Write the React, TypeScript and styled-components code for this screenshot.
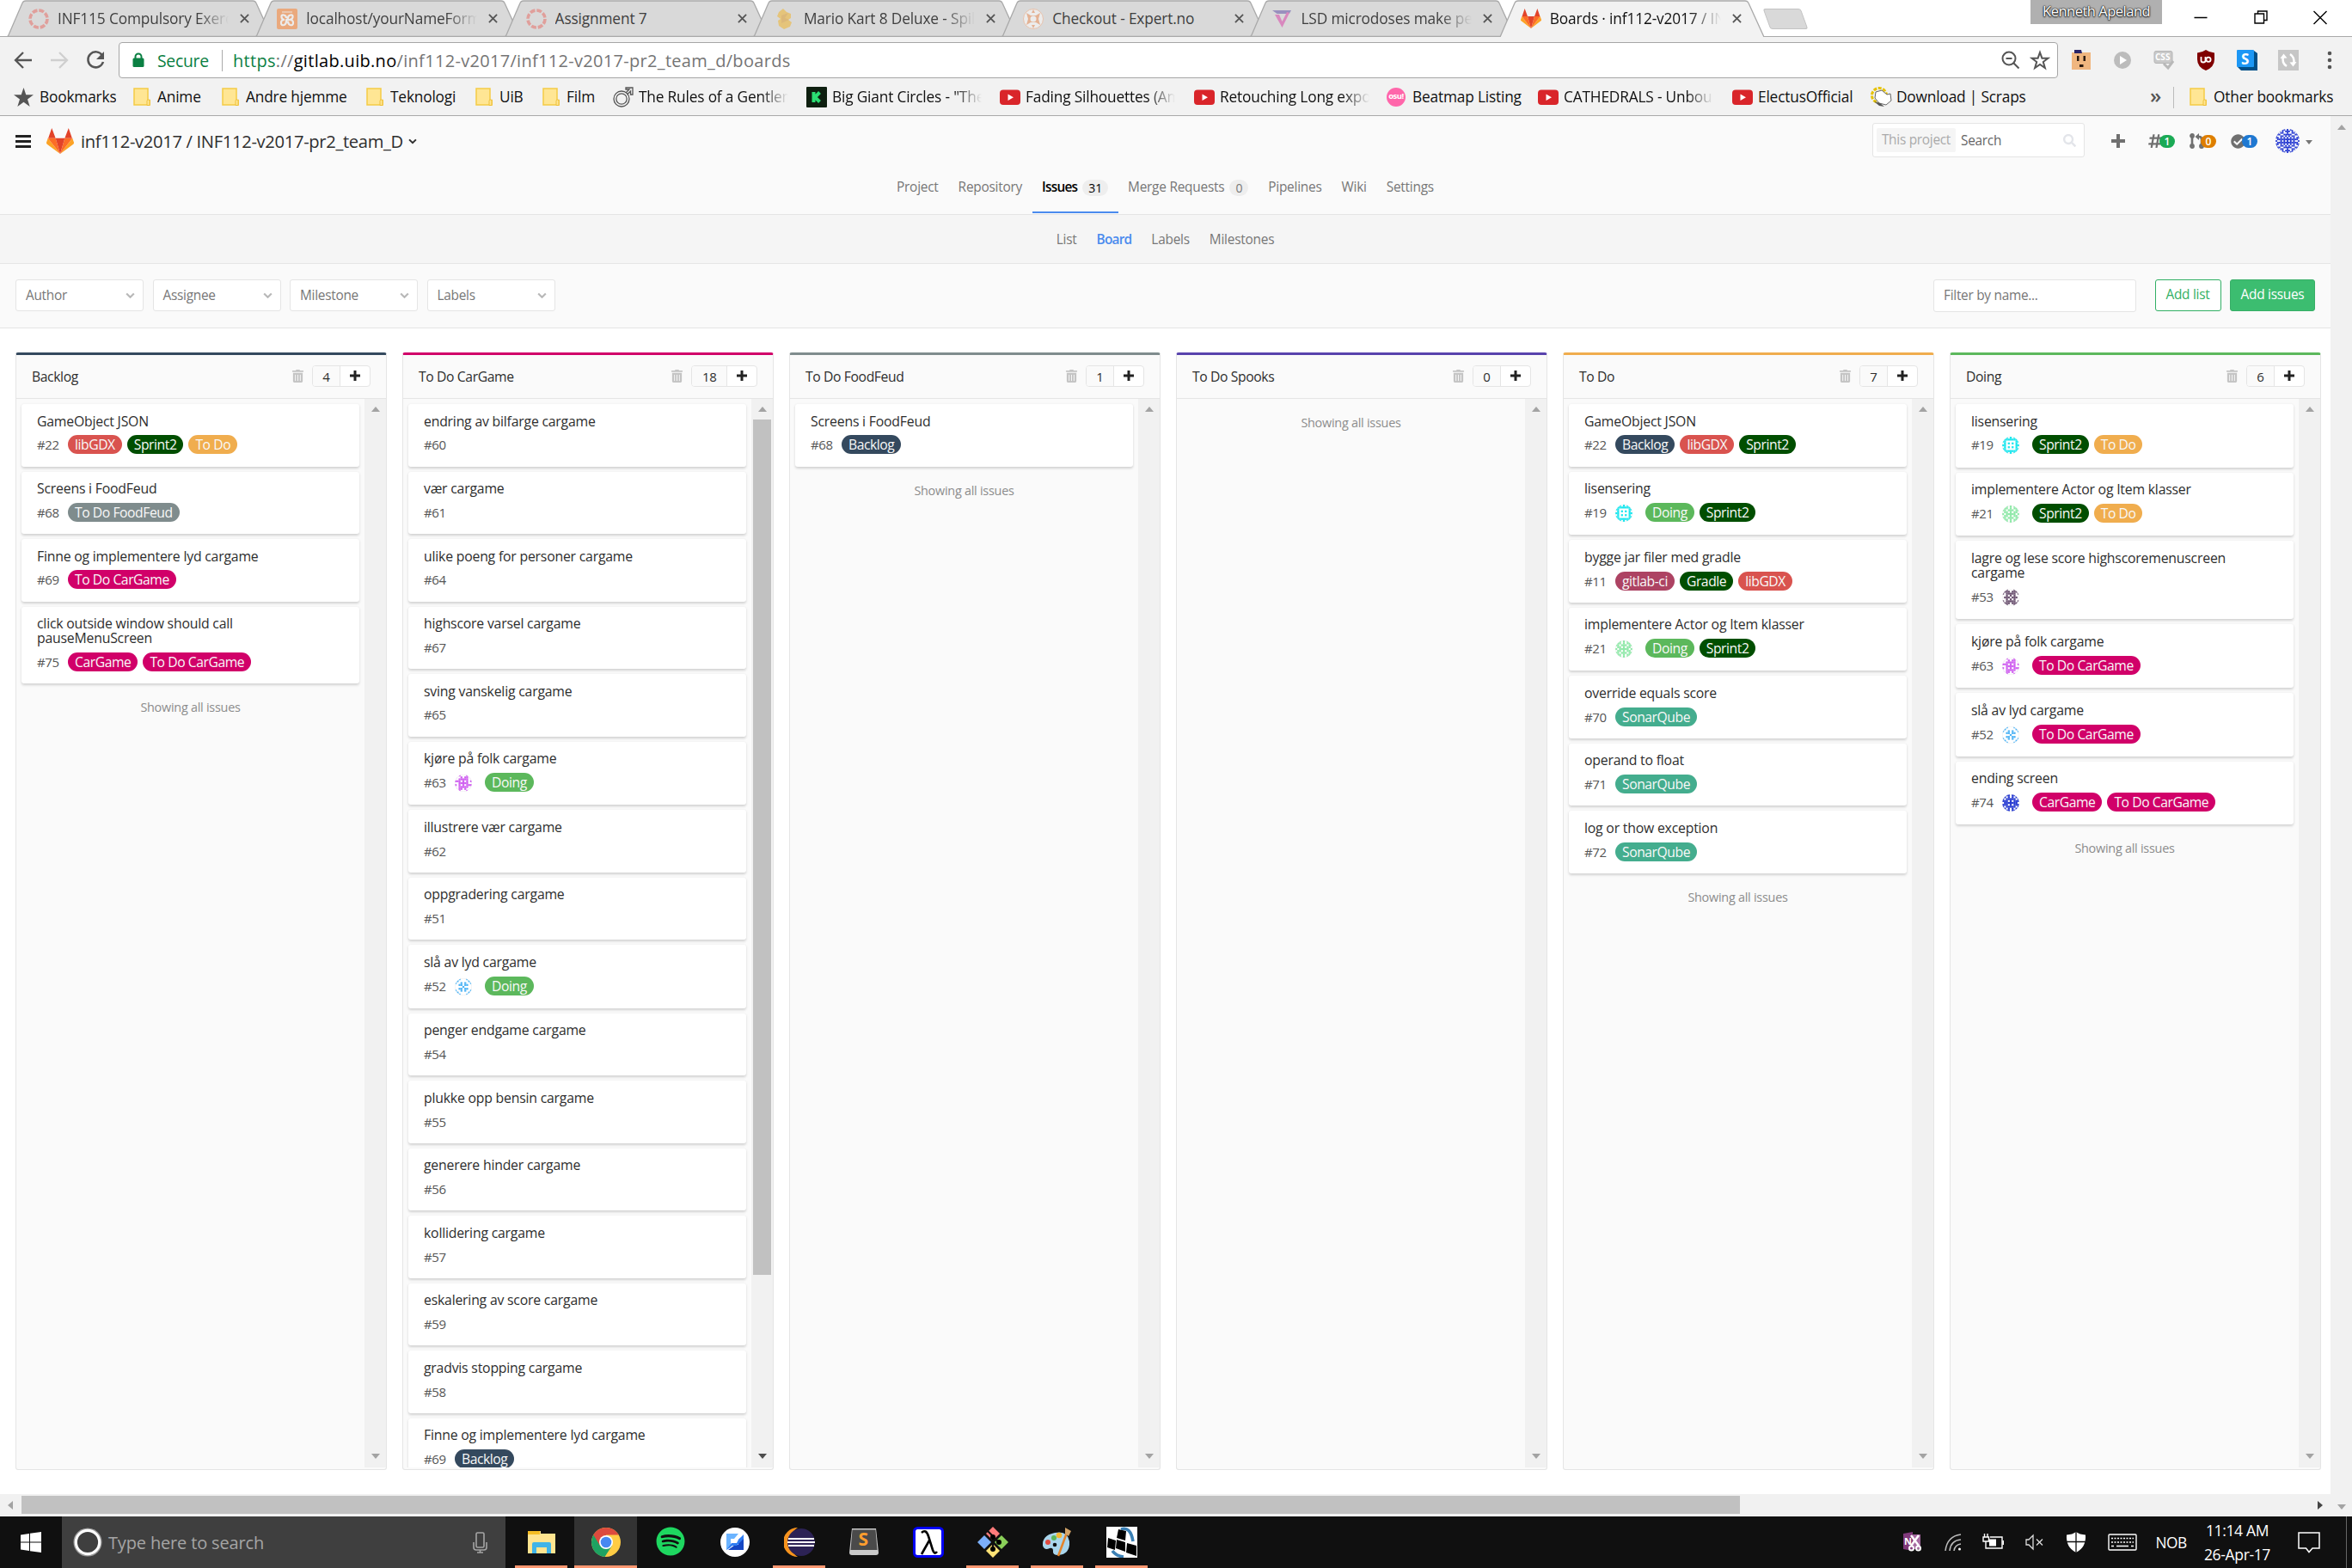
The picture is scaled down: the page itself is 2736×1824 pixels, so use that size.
import React from "react";
import styled, { createGlobalStyle, css } from "styled-components";
import { FaTrashAlt, FaSearch, FaHashtag, FaCheckCircle, FaSpotify } from "react-icons/fa";

const Global = createGlobalStyle`
  *, *::before, *::after { box-sizing: border-box; }
  html, body { margin: 0; padding: 0; }
  body {
    width: 2736px; height: 1824px; overflow: hidden; background: #fff;
    font-family: "Open Sans", "Noto Sans", sans-serif; font-size: 15.4px;
    letter-spacing: -0.018em; color: #333;
  }
  svg { display: block; flex: none; }
`;

const Screen = styled.div`
  width: 2736px; height: 1824px; display: flex; flex-direction: column; overflow: hidden;
`;

/* ---------- browser chrome ---------- */
const TabStrip = styled.div`
  height: 43px; flex: none; display: flex; position: relative; padding-left: 18px; background: #fff;
  border-bottom: 1px solid #a9a9a9;
`;
const Tab = styled.div<{ $active?: boolean }>`
  position: relative; width: 289.3px; flex: none; height: 43px; display: flex; align-items: center;
  padding-left: 15px; font-size: 17.3px; color: ${p => (p.$active ? "#111" : "#3f3f3f")};
  z-index: ${p => (p.$active ? 2 : 1)};
`;
const TabShape = styled.svg`position: absolute; left: -10px; top: 0; z-index: -1;`;
const TabIcon = styled.span<{ $faded?: boolean }>`
  width: 24px; height: 24px; margin-right: 10px; opacity: ${p => (p.$faded ? 0.5 : 1)}; flex: none;
`;
const fade = css`
  -webkit-mask-image: linear-gradient(to right, #000 82%, transparent 100%);
  mask-image: linear-gradient(to right, #000 82%, transparent 100%);
`;
const TabTitle = styled.span<{ $fade?: boolean }>`
  width: 199px; overflow: hidden; white-space: nowrap; line-height: 28px; letter-spacing: -0.008em;
  ${p => p.$fade && fade}
`;
const TabClose = styled.svg`margin-left: 13px;`;
const NewTab = styled.div`
  width: 44px; height: 24px; margin: 10px 0 0 12px; background: #d9d9d9; border: 1px solid #c3c3c3;
  border-radius: 3px; transform: skewX(20deg);
`;
const UserBadge = styled.div`
  width: 153px; height: 28px; margin-left: 263px; background: #b0b0b0; color: #fff; font-size: 16.5px;
  line-height: 26px; text-align: center; letter-spacing: -0.03em;
  text-shadow: 0 0 2px #000, 0 1px 2px #222, 0 0 1px #000;
`;
const WindowButtons = styled.div`
  display: flex; align-items: flex-start; gap: 51.5px; padding: 11px 0 0 36px;
`;

const Toolbar = styled.div`
  height: 49px; flex: none; display: flex; align-items: center; background: #f2f2f2; padding: 5px 0 0 15px;
`;
const NavButtons = styled.div`display: flex; gap: 18px; width: 123px; flex: none;`;
const Omnibox = styled.div`
  width: 2256px; height: 42px; display: flex; align-items: center; background: #fff;
  border: 1.5px solid #a6a6a6; border-radius: 4px; padding-left: 14px; font-size: 20px; flex: none;
`;
const Secure = styled.span`color: #0b8043; margin-left: 14px; width: 75px; font-size: 19.4px;`;
const UrlRule = styled.i`width: 1px; height: 25px; background: #aaa; margin-right: 12px;`;
const BarRule = styled.i`width: 1px; height: 25px; background: #bbb; margin-right: 15px;`;
const Url = styled.span`
  color: #757575; flex: 1; letter-spacing: 0.0155em;
  b { font-weight: 400; color: #000; }
  em { font-style: normal; color: #0b8043; }
`;
const OmniIcons = styled.div`display: flex; gap: 10px; padding-right: 8px;`;
const Extensions = styled.div`
  display: flex; align-items: center; gap: 24.2px; padding-left: 15px;
`;

const Bookmarks = styled.div`
  height: 43px; flex: none; display: flex; align-items: center; background: #f2f2f2;
  border-bottom: 1.5px solid #a9a9a9; padding: 0 0 0 15px; font-size: 17.3px; color: #111;
`;
const Bookmark = styled.div<{ $w: number }>`
  width: ${p => p.$w}px; display: flex; align-items: center; flex: none;
`;
const BookmarkIcon = styled.span`width: 31px; flex: none; display: flex; padding-left: 1px;`;
const BookmarkText = styled.span<{ $fade?: boolean }>`
  white-space: nowrap; overflow: hidden; line-height: 26px; letter-spacing: -0.01em;
  ${p => p.$fade && css`width: 174px; ${fade}`}
`;
const MoreMark = styled.span`
  margin-left: 137px; width: 27px; font-size: 24px; color: #555; line-height: 26px; padding-bottom: 5px; font-weight: 600;
`;

/* ---------- page ---------- */
const Viewport = styled.div`height: 1629px; flex: none; display: flex;`;
const Page = styled.div`width: 2711px; flex: none; display: flex; flex-direction: column; background: #fff;`;
const VScroll = styled.div`
  width: 25px; flex: none; background: #f1f1f1; display: flex; flex-direction: column;
  justify-content: space-between; align-items: center; padding: 10px 0 8px;
`;
const ArrowUp = styled.i`
  border: 5.5px solid transparent; border-top: 0; border-bottom: 6px solid #a3a3a3;
`;
const ArrowDown = styled.i<{ $dark?: boolean }>`
  border: 5.5px solid transparent; border-bottom: 0; border-top: 6px solid ${p => (p.$dark ? "#4d4d4d" : "#a3a3a3")};
`;
const Header = styled.header`
  height: 58px; flex: none; background: #fafafa; display: flex; align-items: center; padding: 0 21px 0 18px;
`;
const Burger = styled.svg`margin-right: 18px;`;
const ProjectTitle = styled.div`
  font-size: 20.2px; color: #2e2e2e; margin-left: 8px; width: 381px; white-space: nowrap; letter-spacing: -0.0165em;
  line-height: 28px;
`;
const Spacer = styled.div`flex: 1;`;
const SearchBox = styled.div`
  width: 247px; height: 40px; border: 1.5px solid #e5e5e5; border-radius: 3px; background: #fff;
  display: flex; align-items: center; padding: 0 9px 0 4px; color: #666; margin-right: 31px; margin-top: -2px;
`;
const SearchScope = styled.span`
  background: #f5f5f5; color: #aaa; width: 92px; height: 28px; line-height: 28px; text-align: center;
  margin-right: 6px; border-radius: 2px; white-space: nowrap;
`;
const SearchText = styled.span`flex: 1;`;
const Counter = styled.div<{ $w: number }>`display: flex; align-items: center; width: ${p => p.$w}px;`;
const CountBadge = styled.span<{ $c: string }>`
  background: ${p => p.$c}; color: #fff; width: 18px; height: 15px; border-radius: 8px; font-size: 12px;
  font-weight: 600; line-height: 15px; text-align: center; margin-left: -4px; letter-spacing: 0;
`;
const Caret = styled.i`border: 4.5px solid transparent; border-bottom: 0; border-top: 5px solid #777; margin-left: 7px; margin-top: 3px;`;

const MainNav = styled.nav`
  height: 57px; flex: none; background: #fafafa; border-bottom: 1.5px solid #e5e5e5;
  display: flex; justify-content: center;
`;
const NavItem = styled.a<{ $active?: boolean }>`
  display: flex; align-items: center; padding: 0 11.5px 4px; color: ${p => (p.$active ? "#000" : "#777")};
  font-weight: ${p => (p.$active ? 600 : 400)}; font-size: 15.4px; height: 55px;
  border-bottom: 2.5px solid ${p => (p.$active ? "#4a8bee" : "transparent")};
  letter-spacing: ${p => (p.$active ? "-0.05em" : "-0.015em")};
`;
const NavBadge = styled.span`
  background: #eee; border-radius: 10px; padding: 0 7px; height: 19px; line-height: 20px; font-size: 14px;
  font-weight: 400; margin-left: 6px; margin-top: 2px; letter-spacing: -0.01em;
`;
const SubNav = styled.nav`
  height: 57px; flex: none; background: #f5f5f5; border-bottom: 1.5px solid #e5e5e5; display: flex;
  justify-content: center; align-items: center; gap: 23px; color: #777; font-size: 15.4px;
`;
const SubItem = styled.a<{ $active?: boolean }>`
  color: ${p => (p.$active ? "#4a8bee" : "#777")}; font-weight: ${p => (p.$active ? 600 : 400)};
  letter-spacing: ${p => (p.$active ? "-0.05em" : "-0.015em")};
`;
const Filters = styled.div`
  height: 75px; flex: none; background: #fafafa; border-bottom: 1.5px solid #e5e5e5; display: flex;
  align-items: center; padding: 0 18px 1px; gap: 10.5px;
`;
const Select = styled.div`
  width: 149px; height: 37px; background: #fff; border: 1.5px solid #e5e5e5; border-radius: 3px;
  display: flex; align-items: center; justify-content: space-between; padding: 0 9px 0 11px; color: #777;
`;
const NameFilter = styled.div`
  width: 236px; height: 38px; background: #fff; border: 1.5px solid #e5e5e5; border-radius: 3px;
  line-height: 36px; padding-left: 11px; color: #777; margin-right: 11px;
`;
const Button = styled.div<{ $solid?: boolean; $w: number }>`
  width: ${p => p.$w}px; height: 37px; border: 1.5px solid ${p => (p.$solid ? "#38ae67" : "#31af64")};
  border-radius: 3px; line-height: 34px; text-align: center; background: ${p => (p.$solid ? "#3cbd70" : "#fff")};
  color: ${p => (p.$solid ? "#fff" : "#31af64")};
`;

/* ---------- board ---------- */
const Board = styled.main`
  height: 1356px; flex: none; padding: 28px 0 0 18px; display: flex; gap: 18px; overflow: hidden;
`;
const Column = styled.section<{ $c: string }>`
  width: 432px; height: 1300px; flex: none; background: #fafafa; border: 1.5px solid #e5e5e5;
  border-top: 3.5px solid ${p => p.$c}; border-radius: 3px; display: flex; flex-direction: column;
`;
const ColumnHead = styled.header`
  height: 51px; flex: none; border-bottom: 1.5px solid #e5e5e5; display: flex; align-items: center;
  padding: 0 18px 2px; color: #2e2e2e; font-weight: 500; font-size: 15.7px;
`;
const ColumnTitle = styled.h3`
  flex: 1; margin: 0; font: inherit; letter-spacing: -0.024em; padding-top: 1px;
`;
const CountGroup = styled.div`
  display: flex; height: 25px; border: 1.5px solid #e5e5e5; border-radius: 4px; margin-left: 9px; background: #fff; overflow: hidden;
`;
const Count = styled.span`
  padding: 0 11.5px; line-height: 24px; background: #fafafa; border-right: 1px solid #e5e5e5; font-size: 15px;
`;
const AddCell = styled.span`width: 34px; display: flex; justify-content: center; padding-top: 5px;`;
const ColumnBody = styled.div`display: flex; height: 1243px; flex: none; overflow: hidden;`;
const CardList = styled.div`width: 405px; padding: 6px 6px 0 6px;`;
const Card = styled.article<{ $h: number }>`
  height: ${p => p.$h}px; margin-bottom: 6px; background: #fff; border-radius: 3px; padding: 11.5px 18px 0;
  box-shadow: 0 1.5px 3px rgba(0, 0, 0, 0.16); display: flex; flex-direction: column; width: 393px;
`;
const CardTitle = styled.h4`
  margin: 0; font-size: 15.8px; font-weight: 500; line-height: 17.3px; color: #2e2e2e; letter-spacing: -0.013em;
  max-width: 330px;
`;
const CardMeta = styled.div`
  display: flex; align-items: center; height: 22px; margin-top: 7.7px; color: #555;
`;
const CardId = styled.span`width: 36px; font-size: 15px; letter-spacing: -0.03em;`;
const AvatarSlot = styled.span`width: 35px; padding-top: 2px;`;
const Pill = styled.span<{ $c: string }>`
  background: ${p => p.$c}; color: #f8f8f8; height: 22px; line-height: 22px; border-radius: 11px; padding: 0 8px;
  margin-right: 6px; font-size: 15.7px; font-weight: 500; white-space: nowrap; letter-spacing: -0.028em;
`;
const Footer = styled.p`
  margin: 0; text-align: center; color: #8c8c8c; font-size: 14.4px; line-height: 43px; letter-spacing: -0.017em;
`;
const ColScroll = styled.div`
  width: 25px; flex: none; background: #f1f1f1; display: flex; flex-direction: column; align-items: center;
  padding: 9px 0 10px; justify-content: space-between;
`;
const Thumb = styled.i`width: 21px; height: 995px; background: #c1c1c1; margin: 9px 0 auto;`;
const HScroll = styled.div`
  height: 25px; flex: none; background: #f1f1f1; display: flex; align-items: center; padding: 0 9px 0 9px;
  justify-content: space-between;
`;
const HThumb = styled.i`width: 1999px; height: 21px; background: #c1c1c1; margin: 0 auto 0 10px;`;
const ArrowSide = styled.i<{ $right?: boolean }>`
  border: 5.5px solid transparent;
  ${p => (p.$right ? "border-right: 0; border-left: 6px solid #444;" : "border-left: 0; border-right: 6px solid #a3a3a3;")}
`;

/* ---------- taskbar ---------- */
const Taskbar = styled.footer`
  height: 60px; flex: none; background: #101010; display: flex; align-items: center; color: #fff;
`;
const Start = styled.div`width: 72px; display: flex; justify-content: center;`;
const TaskSearch = styled.div`
  width: 516px; height: 60px; background: #3f3f3f; display: flex; align-items: center; padding: 0 21px 0 13px;
  color: #a5a5a5; font-size: 20px;
`;
const TaskSearchText = styled.span`flex: 1; margin-left: 7px; letter-spacing: -0.008em; padding-top: 1px;`;
const Apps = styled.div`display: flex; margin-left: 4px; height: 60px;`;
const TaskApp = styled.div<{ $open?: boolean; $active?: boolean }>`
  width: 75px; height: 60px; display: flex; flex-direction: column; align-items: center; padding-top: 12px;
  justify-content: space-between;
  &::after {
    content: ""; height: 3px; width: ${p => (p.$active ? 73 : 61)}px;
    background: ${p => (p.$open || p.$active ? "#ff9770" : "transparent")};
  }
  ${p => p.$active && "background: linear-gradient(to right, transparent 1px, #333 1px, #333 74px, transparent 74px);"}
`;
const Tray = styled.div`display: flex; align-items: center; margin-left: auto; padding-right: 6px; height: 60px;`;
const TrayItem = styled.span<{ $w: number }>`width: ${p => p.$w}px; flex: none; display: flex; justify-content: center;`;
const Lang = styled.span`font-size: 17.3px; width: 49px; letter-spacing: -0.03em; margin-left: 9px;`;
const Clock = styled.div`
  width: 92px; font-size: 17.5px; line-height: 28px; text-align: center; letter-spacing: -0.02em; white-space: nowrap;
`;
const ShowDesktop = styled.i`width: 1.5px; height: 60px; background: #666; margin-left: 6px;`;

/* ---------- drawings ---------- */
const Fox = ({ w, h }: { w: number; h: number }) => (
  <svg width={w} height={h} viewBox="0 0 36 33" preserveAspectRatio="none">
    <path fill="#e24329" d="M2 14 7 0l5 13H2zM34 14 29 0l-5 13h10z" />
    <path fill="#fca326" d="M2 13 0 18.500a2 2 0 0 0 .8 2L18 33zM34 13l2 5.500a2 2 0 0 1-.8 2L18 33z" />
    <path fill="#fc6d26" d="M2 13h10l6 20zM34 13H24l-6 20z" />
    <path fill="#e24329" d="M12 13h12l-6 20z" />
  </svg>
);
const Folder = () => (
  <svg width="24" height="24" viewBox="0 0 24 24">
    <path d="M3 2h16v13.500h2.200V21H3z" fill="#ffe694" stroke="#f5cb45" strokeWidth="1.500" />
    <path d="M18 21.500v-5a1.500 1.500 0 0 1 3 0v5z" fill="#ffe694" stroke="#eec03a" />
  </svg>
);
const YouTube = () => (
  <svg width="24" height="24" viewBox="0 0 24 24">
    <rect y="3.500" width="24" height="17.500" rx="4" fill="#d9252a" />
    <path d="M9.500 8.500 16 12.200l-6.500 3.800z" fill="#fff" />
  </svg>
);
const Ring = () => (
  <svg width="24" height="24" viewBox="0 0 24 24">
    <circle cx="12" cy="12" r="10" fill="none" stroke="#e8665f" strokeWidth="3.600" strokeDasharray="6 1.850" />
  </svg>
);
const Xampp = () => (
  <svg width="24" height="24" viewBox="0 0 24 24">
    <rect width="24" height="24" rx="2" fill="#fb7a24" />
    <path d="M6 4h12" stroke="#fff" strokeWidth="1.500" opacity=".6" />
    <path d="M8 7.500Q5 7 5.500 10T9 13q-4 0-4 3.500T8.500 19Q11 18 11 14.500T14 13q4 0 4.500-3T16 7.500Q13 8 13 11t-3 2M15 13q4 0 4 3.500T15.500 19Q13 18 13 14.500M8 7.500q3 .500 3 3.500" fill="none" stroke="#fff" strokeWidth="2.200" />
  </svg>
);
const Question = () => (
  <svg width="24" height="24" viewBox="0 0 24 24">
    <path d="M10 0l4 4 5 2v5l-3 2 4 3-2 5-7 3-6-4-1-6 3-2-4-3 2-5z" fill="#f2b01e" />
    <path d="M8 8l8-3-4 6 5 2-9 4z" fill="#d2881a" opacity=".6" />
  </svg>
);
const Expert = () => (
  <svg width="24" height="24" viewBox="0 0 24 24">
    <circle cx="12" cy="12" r="11.500" fill="#fff" stroke="#f5a87c" />
    <path d="M4 5l5 3h6l5-3-2 7 2 7-5-3H9l-5 3 2-7z" fill="#f08d52" />
    <circle cx="12" cy="12" r="3.500" fill="#fff" />
    <path d="M12 1l2 4h-4zM12 23l2-4h-4z" fill="#f08d52" />
  </svg>
);
const Verge = () => (
  <svg width="24" height="24" viewBox="0 0 24 24">
    <path d="M1 2h22l-2.200 4H6.500z" fill="#5b4aa5" />
    <path d="M4 7l8.500 15L21 5l-3-1-5.500 11L9 7z" fill="#d83aa5" />
  </svg>
);
const MarsRing = () => (
  <svg width="24" height="24" viewBox="0 0 24 24" fill="none" stroke="#555" strokeWidth="1.300">
    <circle cx="10" cy="14" r="9" /><circle cx="10" cy="14" r="6.200" />
    <path d="M15 7l4-4h-4V1h8v8h-2.500V5l-4 4" />
  </svg>
);
const Kicks = () => (
  <svg width="24" height="24" viewBox="0 0 24 24">
    <rect width="24" height="24" rx="1" fill="#0e1f10" />
    <path d="M8.500 6v12M15.500 6.500 10 12l5.500 5.500" stroke="#2bde73" strokeWidth="4" fill="none" />
  </svg>
);
const OsuBadge = styled.span`
  width: 22px; height: 22px; border-radius: 50%; background: #ff66aa; color: #fff; font-size: 9.5px; font-weight: 700;
  line-height: 20px; text-align: center; letter-spacing: -0.5px;
`;
const Scraps = () => (
  <svg width="25" height="24" viewBox="0 0 25 24">
    <circle cx="10" cy="10" r="8.500" fill="none" stroke="#e6c200" strokeWidth="3" strokeDasharray="4 1.500" />
    <path d="M6 6l7-2 6 5 4-1 1 8-6 5-8-2-5-6z" fill="#fff" stroke="#666" />
    <path d="M4 17l7 2 5 4-6-1z" fill="#555" />
  </svg>
);
const Plus = ({ s, c, sw }: { s: number; c: string; sw: number }) => (
  <svg width={s} height={s} viewBox={`0 0 ${s} ${s}`} stroke={c} strokeWidth={sw}>
    <path d={`M0 ${s / 2}h${s}M${s / 2} 0v${s}`} />
  </svg>
);
const Chevron = ({ c, w = 11 }: { c: string; w?: number }) => (
  <svg width={w} height={w * 0.7} viewBox="0 0 11 8" fill="none" stroke={c} strokeWidth="2.200"><path d="M1 1.500l4.500 4.500L10 1.500" /></svg>
);

const patterns: Record<string, { c: string; rows: string[] }> = {
  cyan: { c: "#19e6ee", rows: ["..x.x.x..", ".xxxxxxx.", "xx.....xx", ".x.x.x.x.", "xx.....xx", ".x.x.x.x.", "xx.....xx", ".xxxxxxx.", "..x.x.x.."] },
  mint: { c: "#8fe8a8", rows: ["x.x.x.x.x", ".xx.x.xx.", "xx.xxx.xx", ".xx.x.xx.", "x.xxxxx.x", ".xx.x.xx.", "xx.xxx.xx", ".xx.x.xx.", "x.x.x.x.x"] },
  plum: { c: "#6c5371", rows: ["xxx...xxx", "xxxx.xxxx", "x.xxxxx.x", "..x.x.x..", ".xxx.xxx.", "..x.x.x..", "x.xxxxx.x", "xxxx.xxxx", "xxx...xxx"] },
  violet: { c: "#cf5ff0", rows: ["..x...x..", "x..x.xx.x", "..xxxxx..", "xxx.x.x.x", "..xxxxx..", "x.x.x.xxx", "..xxxxx..", "x.xx.x..x", "..x...x.."] },
  sky: { c: "#4fb4f5", rows: ["..x...x..", ".x.....x.", "x..x.x..x", "..xx.xx..", "....x....", "..xx.xx..", "x..x.x..x", ".x.....x.", "..x...x.."] },
  navy: { c: "#2438d0", rows: ["x.xx.xx.x", ".x.x.x.x.", "x.xxxxx.x", "xxx.x.xxx", ".xxxxxxx.", "xxx.x.xxx", "x.xxxxx.x", ".x.x.x.x.", "x.xx.xx.x"] },
  owner: { c: "#2438d0", rows: [
    "..x.xx.x.xx.x..", ".xx.x.xxx.x.xx.", "xx.xx..x..xx.xx", ".xx..xxxxx..xx.", "x..xx.x.x.xx..x", "xx.x.x.x.x.x.xx", ".xxxxxxxxxxxxx.", "x..x.x.x.x.x..x",
    ".xxxxxxxxxxxxx.", "xx.x.x.x.x.x.xx", "x..xx.x.x.xx..x", ".xx..xxxxx..xx.", "xx.xx..x..xx.xx", ".xx.x.xxx.x.xx.", "..x.xx.x.xx.x.."] },
};
const Avatar = ({ k, s = 20 }: { k: string; s?: number }) => {
  const p = patterns[k];
  const n = p.rows.length;
  return (
    <svg width={s} height={s} viewBox={`0 0 ${n} ${n}`}>
      <defs><clipPath id={"disc-" + k}><circle cx={n / 2} cy={n / 2} r={n / 2 - 0.05} /></clipPath></defs>
      <circle cx={n / 2} cy={n / 2} r={n / 2 - 0.1} fill="#fff" stroke="#ddd" strokeWidth=".15" />
      <g clipPath={`url(#disc-${k})`} fill={p.c}>
        {p.rows.flatMap((r, y) => r.split("").map((ch, x) => ch === "x" ? <rect key={x + "-" + y} x={x} y={y} width="1.020" height="1.020" /> : null))}
      </g>
    </svg>
  );
};

/* ---------- data ---------- */
const tabs = [
  { t: "INF115 Compulsory Exerc", i: <Ring />, f: true },
  { t: "localhost/yourNameForm", i: <Xampp />, f: true },
  { t: "Assignment 7", i: <Ring /> },
  { t: "Mario Kart 8 Deluxe - Spil", i: <Question />, f: true },
  { t: "Checkout - Expert.no", i: <Expert /> },
  { t: "LSD microdoses make peo", i: <Verge />, f: true },
  { t: "Boards · inf112-v2017 / IN", i: <Fox w={24} h={23} />, f: true, active: true },
];
const bookmarks: { t: string; w: number; i: React.ReactNode; f?: boolean }[] = [
  { t: "Bookmarks", w: 137, i: <svg width="23" height="23" viewBox="0 0 24 24"><path fill="#555" d="M12 0l2.900 8.600H24l-7.300 5.400 2.800 9L12 17.600 4.500 23l2.800-9L0 8.600h9.100z" /></svg> },
  { t: "Anime", w: 103, i: <Folder /> },
  { t: "Andre hjemme", w: 168, i: <Folder /> },
  { t: "Teknologi", w: 127, i: <Folder /> },
  { t: "UiB", w: 78, i: <Folder /> },
  { t: "Film", w: 84, i: <Folder /> },
  { t: "The Rules of a Gentlem", w: 225, i: <MarsRing />, f: true },
  { t: "Big Giant Circles - \"The", w: 225, i: <Kicks />, f: true },
  { t: "Fading Silhouettes (Am", w: 226, i: <YouTube />, f: true },
  { t: "Retouching Long expos", w: 224, i: <YouTube />, f: true },
  { t: "Beatmap Listing", w: 176, i: <OsuBadge>osu!</OsuBadge> },
  { t: "CATHEDRALS - Unbou", w: 226, i: <YouTube />, f: true },
  { t: "ElectusOfficial", w: 161, i: <YouTube /> },
  { t: "Download | Scraps", w: 189, i: <Scraps /> },
];

const L: Record<string, string> = {
  libGDX: "#d9534f", Sprint2: "#004e00", "To Do": "#f0ad4e", "To Do FoodFeud": "#7f8c8d", "To Do CarGame": "#d10069",
  CarGame: "#d10069", Backlog: "#34495e", Doing: "#5cb85c", "gitlab-ci": "#ad4363", Gradle: "#004e00", SonarQube: "#44ad8e",
};
type Issue = { t: string; n: number; l?: string[]; a?: string; two?: boolean };
const columns: { t: string; c: string; count: number; issues: Issue[]; long?: boolean }[] = [
  { t: "Backlog", c: "#34495e", count: 4, issues: [
    { t: "GameObject JSON", n: 22, l: ["libGDX", "Sprint2", "To Do"] },
    { t: "Screens i FoodFeud", n: 68, l: ["To Do FoodFeud"] },
    { t: "Finne og implementere lyd cargame", n: 69, l: ["To Do CarGame"] },
    { t: "click outside window should call pauseMenuScreen", n: 75, l: ["CarGame", "To Do CarGame"], two: true },
  ] },
  { t: "To Do CarGame", c: "#d10069", count: 18, long: true, issues: [
    { t: "endring av bilfarge cargame", n: 60 },
    { t: "vær cargame", n: 61 },
    { t: "ulike poeng for personer cargame", n: 64 },
    { t: "highscore varsel cargame", n: 67 },
    { t: "sving vanskelig cargame", n: 65 },
    { t: "kjøre på folk cargame", n: 63, a: "violet", l: ["Doing"] },
    { t: "illustrere vær cargame", n: 62 },
    { t: "oppgradering cargame", n: 51 },
    { t: "slå av lyd cargame", n: 52, a: "sky", l: ["Doing"] },
    { t: "penger endgame cargame", n: 54 },
    { t: "plukke opp bensin cargame", n: 55 },
    { t: "generere hinder cargame", n: 56 },
    { t: "kollidering cargame", n: 57 },
    { t: "eskalering av score cargame", n: 59 },
    { t: "gradvis stopping cargame", n: 58 },
    { t: "Finne og implementere lyd cargame", n: 69, l: ["Backlog"] },
  ] },
  { t: "To Do FoodFeud", c: "#7f8c8d", count: 1, issues: [{ t: "Screens i FoodFeud", n: 68, l: ["Backlog"] }] },
  { t: "To Do Spooks", c: "#5843ad", count: 0, issues: [] },
  { t: "To Do", c: "#f0ad4e", count: 7, issues: [
    { t: "GameObject JSON", n: 22, l: ["Backlog", "libGDX", "Sprint2"] },
    { t: "lisensering", n: 19, a: "cyan", l: ["Doing", "Sprint2"] },
    { t: "bygge jar filer med gradle", n: 11, l: ["gitlab-ci", "Gradle", "libGDX"] },
    { t: "implementere Actor og Item klasser", n: 21, a: "mint", l: ["Doing", "Sprint2"] },
    { t: "override equals score", n: 70, l: ["SonarQube"] },
    { t: "operand to float", n: 71, l: ["SonarQube"] },
    { t: "log or thow exception", n: 72, l: ["SonarQube"] },
  ] },
  { t: "Doing", c: "#5cb85c", count: 6, issues: [
    { t: "lisensering", n: 19, a: "cyan", l: ["Sprint2", "To Do"] },
    { t: "implementere Actor og Item klasser", n: 21, a: "mint", l: ["Sprint2", "To Do"] },
    { t: "lagre og lese score highscoremenuscreen cargame", n: 53, a: "plum", two: true },
    { t: "kjøre på folk cargame", n: 63, a: "violet", l: ["To Do CarGame"] },
    { t: "slå av lyd cargame", n: 52, a: "sky", l: ["To Do CarGame"] },
    { t: "ending screen", n: 74, a: "navy", l: ["CarGame", "To Do CarGame"] },
  ] },
];

/* ---------- sections ---------- */
const BrowserChrome = () => (
  <>
    <TabStrip>
      {tabs.map((t, k) => (
        <Tab key={k} $active={t.active}>
          <TabShape width="312" height="43" viewBox="0 0 312 43">
            <path d="M1 43 L18 3.500 Q19 1 22 1 H286 Q289 1 290 3.500 L308 43" fill={t.active ? "#f2f2f2" : "#d9d9d9"} stroke="#a9a9a9" strokeWidth="1.300" />
            {!t.active && <path d="M0 42.300h310" stroke="#a9a9a9" strokeWidth="1.300" />}
          </TabShape>
          <TabIcon $faded={!t.active}>{t.i}</TabIcon>
          <TabTitle $fade={t.f}>{t.t}</TabTitle>
          <TabClose width="11" height="11" viewBox="0 0 12 12" stroke="#555" strokeWidth="2"><path d="M1 1l10 10M11 1 1 11" /></TabClose>
        </Tab>
      ))}
      <NewTab />
      <UserBadge>Kenneth Apeland</UserBadge>
      <WindowButtons>
        <svg width="18" height="18" viewBox="0 0 18 18"><path d="M1.500 9.500h15" stroke="#000" strokeWidth="1.500" /></svg>
        <svg width="18" height="18" viewBox="0 0 18 18" fill="none" stroke="#000" strokeWidth="1.400"><path d="M2 5h10.500v11H2zM5.500 5V2H16v10.500h-3.500" /></svg>
        <svg width="18" height="18" viewBox="0 0 18 18" stroke="#000" strokeWidth="1.400"><path d="M1.500 2l15 15M16.500 2l-15 15" /></svg>
      </WindowButtons>
    </TabStrip>
    <Toolbar>
      <NavButtons>
        <svg width="24" height="24" viewBox="0 0 24 24" fill="none" stroke="#555" strokeWidth="2.300"><path d="M22 12H3.500M12 3l-9 9 9 9" /></svg>
        <svg width="24" height="24" viewBox="0 0 24 24" fill="none" stroke="#cfcfcf" strokeWidth="2.300"><path d="M2 12h18.500M12 3l9 9-9 9" /></svg>
        <svg width="24" height="24" viewBox="0 0 24 24" fill="none" stroke="#555" strokeWidth="2.500"><path d="M20 6.500A9 9 0 1 0 21 14" /><path d="M22 2v9h-9z" fill="#555" stroke="none" /></svg>
      </NavButtons>
      <Omnibox>
        <svg width="16" height="18" viewBox="0 0 16 18"><rect x="1.500" y="6.500" width="13" height="10.500" rx="1.500" fill="#0b8043" /><path d="M4.500 7V5a3.500 3.500 0 0 1 7 0v2" fill="none" stroke="#0b8043" strokeWidth="2" /></svg>
        <Secure>Secure</Secure>
        <UrlRule />
        <Url><em>https</em>://<b>gitlab.uib.no</b>/inf112-v2017/inf112-v2017-pr2_team_d/boards</Url>
        <OmniIcons>
          <svg width="24" height="24" viewBox="0 0 24 24" fill="none" stroke="#555" strokeWidth="2"><circle cx="10" cy="10" r="7.500" /><path d="M6.500 10h7M15.500 15.500l6 6" /></svg>
          <svg width="24" height="24" viewBox="0 0 24 24" fill="none" stroke="#555" strokeWidth="2"><path d="M12 3l2.400 6.700h7L15.800 14l2.100 7L12 17l-5.900 4 2.100-7L2.600 9.700h7z" /></svg>
        </OmniIcons>
      </Omnibox>
      <Extensions>
        <svg width="24" height="24" viewBox="0 0 24 24"><rect x="1" y="3" width="22" height="20" fill="#f0b67f" /><path d="M4 0h8l1 4H4z" fill="#2a2468" /><path d="M7 7h2.500v6H7zM14.500 7H17v6h-2.500zM10 17h4.500v3H10z" fill="#2b1a10" /></svg>
        <svg width="24" height="24" viewBox="0 0 24 24"><circle cx="12" cy="12" r="10" fill="#bcbcbc" /><path d="M9 7l8 5-8 5z" fill="#fff" /></svg>
        <svg width="24" height="24" viewBox="0 0 24 24"><rect x="1" y="1.500" width="21" height="14" rx="2" fill="#c9c9c9" stroke="#b5b5b5" /><text x="2" y="12.300" fontSize="10" fontWeight="700" letterSpacing="0" fill="#fff">CSS</text><path d="M12 16l5 5 6-8" stroke="#b8b8b8" strokeWidth="3" fill="none" /></svg>
        <svg width="24" height="24" viewBox="0 0 24 24"><path d="M12 0q4 3 10 3.500V11q0 9-10 13Q2 20 2 11V3.500Q8 3 12 0z" fill="#800000" /><path d="M6.500 8v4.500q0 2 2.500 2t2.500-2V8" stroke="#fff" strokeWidth="1.800" fill="none" /><circle cx="15" cy="11.300" r="2.600" stroke="#fff" strokeWidth="1.800" fill="none" /></svg>
        <svg width="24" height="24" viewBox="0 0 24 24"><path d="M20 1l4 3v20H5l-4-4z" fill="#004f87" /><rect width="20" height="20" rx="1" fill="#1c97f5" /><text x="5" y="16.500" fontSize="17" fontWeight="700" fill="#fff">S</text></svg>
        <svg width="24" height="24" viewBox="0 0 24 24"><rect width="24" height="24" fill="#c6c6c6" /><path d="M10 19Q4 15 6 8M14 5q6 4 4 11" stroke="#fff" strokeWidth="2.500" fill="none" /><path d="M2.500 10l4-5.500 4 5zM21.500 14l-4 5.500-4-5z" fill="#fff" /></svg>
        <svg width="24" height="24" viewBox="0 0 24 24" fill="#555"><circle cx="12" cy="4" r="2.300" /><circle cx="12" cy="12" r="2.300" /><circle cx="12" cy="20" r="2.300" /></svg>
      </Extensions>
    </Toolbar>
    <Bookmarks>
      {bookmarks.map((b, k) => (
        <Bookmark key={k} $w={b.w}>
          <BookmarkIcon>{b.i}</BookmarkIcon>
          <BookmarkText $fade={b.f}>{b.t}</BookmarkText>
        </Bookmark>
      ))}
      <MoreMark>»</MoreMark>
      <BarRule />
      <Bookmark $w={180}>
        <BookmarkIcon><Folder /></BookmarkIcon>
        <BookmarkText>Other bookmarks</BookmarkText>
      </Bookmark>
    </Bookmarks>
  </>
);

const PageTop = () => (
  <>
    <Header>
      <Burger width="18" height="15" viewBox="0 0 18 15" stroke="#222" strokeWidth="2.800"><path d="M0 1.500h18M0 7.500h18M0 13.500h18" /></Burger>
      <Fox w={32} h={30} />
      <ProjectTitle>inf112-v2017 / INF112-v2017-pr2_team_D</ProjectTitle>
      <Chevron c="#2e2e2e" w={10} />
      <Spacer />
      <SearchBox>
        <SearchScope>This project</SearchScope>
        <SearchText>Search</SearchText>
        <FaSearch size={15} color="#e3e5ea" />
      </SearchBox>
      <Counter $w={42}><Plus s={16} c="#707070" sw={4} /></Counter>
      <Counter $w={49}><FaHashtag size={18} color="#707070" /><CountBadge $c="#1aaa55">1</CountBadge></Counter>
      <Counter $w={48}>
        <svg width="17" height="18" viewBox="0 0 17 18" fill="none" stroke="#707070" strokeWidth="2.600">
          <path d="M3 3v12M14 15V7q0-3-3-3H9" /><path d="M11 0v8L6.500 4z" fill="#707070" stroke="none" />
          <circle cx="3" cy="3" r="1.600" /><circle cx="3" cy="15" r="1.600" /><circle cx="14" cy="15" r="1.600" />
        </svg>
        <CountBadge $c="#de7e00">0</CountBadge>
      </Counter>
      <Counter $w={52}><FaCheckCircle size={17} color="#707070" /><CountBadge $c="#1f78d1">1</CountBadge></Counter>
      <Avatar k="owner" s={28} />
      <Caret />
    </Header>
    <MainNav>
      <NavItem>Project</NavItem>
      <NavItem>Repository</NavItem>
      <NavItem $active>Issues<NavBadge>31</NavBadge></NavItem>
      <NavItem>Merge Requests<NavBadge>0</NavBadge></NavItem>
      <NavItem>Pipelines</NavItem>
      <NavItem>Wiki</NavItem>
      <NavItem>Settings</NavItem>
    </MainNav>
    <SubNav>
      <SubItem>List</SubItem>
      <SubItem $active>Board</SubItem>
      <SubItem>Labels</SubItem>
      <SubItem>Milestones</SubItem>
    </SubNav>
    <Filters>
      {["Author", "Assignee", "Milestone", "Labels"].map(f => (
        <Select key={f}>{f}<Chevron c="#b8b8b8" w={11} /></Select>
      ))}
      <Spacer />
      <NameFilter>Filter by name...</NameFilter>
      <Button $w={77}>Add list</Button>
      <Button $w={99} $solid>Add issues</Button>
    </Filters>
  </>
);

const BoardColumn = ({ col }: { col: (typeof columns)[number] }) => (
  <Column $c={col.c}>
    <ColumnHead>
      <ColumnTitle>{col.t}</ColumnTitle>
      <FaTrashAlt size={15} color="#c4c4c4" />
      <CountGroup>
        <Count>{col.count}</Count>
        <AddCell><Plus s={12} c="#222" sw={3} /></AddCell>
      </CountGroup>
    </ColumnHead>
    <ColumnBody>
      <CardList>
        {col.issues.map((it, k) => (
          <Card key={k} $h={(it.a ? 73.7 : 72.5) + (it.two ? 17.3 : 0)}>
            <CardTitle>{it.t}</CardTitle>
            <CardMeta>
              <CardId>#{it.n}</CardId>
              {it.a && <AvatarSlot><Avatar k={it.a} /></AvatarSlot>}
              {it.l?.map(l => <Pill key={l} $c={L[l]}>{l}</Pill>)}
            </CardMeta>
          </Card>
        ))}
        {!col.long && <Footer>Showing all issues</Footer>}
      </CardList>
      <ColScroll>
        <ArrowUp />
        {col.long && <Thumb />}
        <ArrowDown $dark={col.long} />
      </ColScroll>
    </ColumnBody>
  </Column>
);

const WindowsTaskbar = () => (
  <Taskbar>
    <Start>
      <svg width="24" height="24" viewBox="0 0 24 24" fill="#fff"><path d="M0 3.400 10 2v9.500H0zM11 1.800 24 0v11.500H11zM0 12.500h10V22L0 20.600zM11 12.500h13V24l-13-1.800z" /></svg>
    </Start>
    <TaskSearch>
      <svg width="34" height="34" viewBox="0 0 34 34" fill="none"><circle cx="17" cy="17" r="15.800" stroke="#999" strokeWidth="1.500" /><circle cx="17" cy="17" r="13.700" stroke="#fff" strokeWidth="3.200" /></svg>
      <TaskSearchText>Type here to search</TaskSearchText>
      <svg width="17" height="25" viewBox="0 0 17 25" fill="none" stroke="#a5a5a5" strokeWidth="1.600"><rect x="4" y="1" width="9" height="17" rx="1.500" /><path d="M1 12v6q0 3 3 3h9q3 0 3-3v-6M8.500 21v3M5 24h7" /></svg>
    </TaskSearch>
    <Apps>
      <TaskApp $open>
        <svg width="32" height="36" viewBox="0 0 32 36"><path d="M0 5h15v3h17v23H0z" fill="#ffe48f" /><path d="M0 5h14v4H0z" fill="#f5bd24" /><path d="M5 31V20q0-2 2-2h18q2 0 2 2v11h-5v-7H10v7z" fill="#3fb4e8" /></svg>
      </TaskApp>
      <TaskApp $active>
        <svg width="36" height="36" viewBox="0 0 36 36">
          <circle cx="18" cy="18" r="17" fill="#fc4" />
          <path d="M18 18 3.300 9.500A17 17 0 0 1 32.700 9.500H18z" fill="#dd4b3e" />
          <path d="M3.300 9.500A17 17 0 0 0 16.500 35L25 22l-7-4z" fill="#1ea362" />
          <path d="M3.300 9.500 11 22l7-4V9.500z" fill="#dd4b3e" />
          <circle cx="18" cy="18" r="8" fill="#fff" /><circle cx="18" cy="18" r="6.300" fill="#4688f1" />
        </svg>
      </TaskApp>
      <TaskApp><FaSpotify size={34} color="#1ed760" /></TaskApp>
      <TaskApp>
        <svg width="36" height="36" viewBox="0 0 36 36"><circle cx="18" cy="18" r="17" fill="#fff" /><path d="M8 8h14l-5 6h-4v10L8 27z" fill="#6cb4ff" /><path d="M28 10v17H10l8-6h4V15z" fill="#1547c4" /><path d="M8 27l6-8h6l2-4 6-6v5l-8 8h-5z" fill="#2f7df2" /></svg>
      </TaskApp>
      <TaskApp $open>
        <svg width="36" height="36" viewBox="0 0 36 36"><path d="M16 1A17 17 0 0 0 16 35 20 20 0 0 1 16 1z" fill="#f7941e" /><circle cx="20" cy="18" r="16" fill="#2c2255" /><path d="M5 14h30M4 18h32M5 22h30" stroke="#fff" strokeWidth="2" /></svg>
      </TaskApp>
      <TaskApp>
        <svg width="36" height="36" viewBox="0 0 36 36"><path d="M4 2h28l3 28q0 3-3 3H4q-3 0-3-3z" fill="#c9c9c9" /><path d="M4.500 3.500h27L33.500 27h-31z" fill="#4a4a4a" /><text x="11.500" y="21.500" fontSize="21" fontWeight="700" fill="#ff9d2e">S</text></svg>
      </TaskApp>
      <TaskApp>
        <svg width="36" height="36" viewBox="0 0 36 36"><rect x="1.500" y="1.500" width="33" height="33" rx="4" fill="#fff" stroke="#0000f5" strokeWidth="3" /><path d="M10 7q5-5 8 4l5 16q2 6 5 2M19 16l-9 16" fill="none" stroke="#000" strokeWidth="2.600" /></svg>
      </TaskApp>
      <TaskApp $open>
        <svg width="36" height="36" viewBox="0 0 36 36"><path d="M18 0l8 8-8 8-8-8z" fill="#ff7b7b" /><path d="M28 10l8 8-8 8-8-8z" fill="#89cf58" /><path d="M18 20l8 8-8 8-8-8z" fill="#ffe275" /><path d="M8 10l8 8-8 8-8-8z" fill="#7cb0fb" /><path d="M12 5l6 6v15M18 12l7 6" stroke="#101010" strokeWidth="2.200" fill="none" /><circle cx="18" cy="26" r="3" /><circle cx="25" cy="18" r="3" /><circle cx="18" cy="12" r="3" /></svg>
      </TaskApp>
      <TaskApp $open>
        <svg width="36" height="36" viewBox="0 0 36 36"><path d="M15 7q15-3 17 10 1 15-13 16-7 0-6-5 0-4-4-3-6 3-8-3Q0 10 15 7z" fill="#a9d5ec" /><circle cx="14" cy="13" r="3" fill="#5cb85c" /><circle cx="20" cy="10" r="3.300" fill="#f5b731" /><circle cx="7" cy="18" r="3" fill="#e04a3f" /><circle cx="15" cy="21" r="2.300" fill="#101010" /><path d="M29 7 19 34" stroke="#e3842c" strokeWidth="2.500" /><path d="M27 1l7 4-3 6-4-3z" fill="#d2a368" /></svg>
      </TaskApp>
      <TaskApp $open>
        <svg width="36" height="36" viewBox="0 0 36 36"><rect width="36" height="36" fill="#fff" /><path d="M17 3q11-4 14 14M7 28q4 6 13 7" fill="none" stroke="#3b80b5" strokeWidth="3.600" /><path d="M14 3l9 2-1 11-10-3zM2 13l9 3-1 11-9-3zM12 15l10 3v11l-11-4zM24 19l11 3v12l-12-4z" fill="#000" /></svg>
      </TaskApp>
    </Apps>
    <Tray>
      <TrayItem $w={48}>
        <svg width="24" height="24" viewBox="0 0 24 24"><path d="M1 2l11-2v22L1 20z" fill="#80397b" /><path d="M12 3h9v17h-9z" fill="#a569a0" /><text x="2" y="15" fontSize="11" fontWeight="700" fill="#fff">N</text><path d="M10 4l9 12M19 4l-9 12" stroke="#fff" strokeWidth="2.500" /><g fill="none" stroke="#fff" strokeWidth="2"><circle cx="10.500" cy="19" r="2.500" /><circle cx="18.500" cy="19" r="2.500" /></g></svg>
      </TrayItem>
      <TrayItem $w={46}>
        <svg width="20" height="20" viewBox="0 0 20 20" fill="none" stroke="#bbb" strokeWidth="1.500"><path d="M1 20Q3 3 19 1M6 20q1-12 13-13M11 20q1-7 8-8" /><circle cx="17.500" cy="18" r="1.500" fill="#fff" stroke="none" /></svg>
      </TrayItem>
      <TrayItem $w={48}>
        <svg width="25" height="20" viewBox="0 0 25 20" fill="none" stroke="#fff" strokeWidth="1.400"><path d="M9 4h14v13H6M24.500 8v5M2.500 0v4M6 0v4M1 4h6.500v5H1zM4 9v8h3" /><path d="M8 6.500h8v8H8z" fill="#fff" stroke="none" /></svg>
      </TrayItem>
      <TrayItem $w={48}>
        <svg width="22" height="20" viewBox="0 0 22 20" fill="none" stroke="#ddd" strokeWidth="1.300"><path d="M1 7v6h3l5 5V2L4 7zM13 6.500l7 7M20 6.500l-7 7" /></svg>
      </TrayItem>
      <TrayItem $w={48}>
        <svg width="24" height="24" viewBox="0 0 24 24"><path d="M12 0q4 3 11 3.500Q24 18 12 24 0 18 1 3.500 8 3 12 0z" fill="#fff" /><path d="M12 0v24M1 11.500h22" stroke="#101010" strokeWidth="1.300" /></svg>
      </TrayItem>
      <TrayItem $w={60}>
        <svg width="34" height="20" viewBox="0 0 34 20" fill="none" stroke="#fff" strokeWidth="1.400"><rect x="1" y="1" width="32" height="18" rx="1" /><path d="M4 5.500h26M4 10h26" strokeDasharray="2 1.500" /><path d="M4 14.500h3M10 14.500h14M27 14.500h3" /></svg>
      </TrayItem>
      <Lang>NOB</Lang>
      <Clock>11:14 AM<br />26-Apr-17</Clock>
      <TrayItem $w={74}>
        <svg width="26" height="25" viewBox="0 0 26 25" fill="none" stroke="#fff" strokeWidth="1.500"><path d="M1 1h24v18h-8l-4 4.500L9.500 19H1z" /></svg>
      </TrayItem>
      <ShowDesktop />
    </Tray>
  </Taskbar>
);

export default function App() {
  return (
    <Screen>
      <Global />
      <BrowserChrome />
      <Viewport>
        <Page>
          <PageTop />
          <Board>
            {columns.map(c => <BoardColumn key={c.t} col={c} />)}
          </Board>
          <HScroll>
            <ArrowSide />
            <HThumb />
            <ArrowSide $right />
          </HScroll>
        </Page>
        <VScroll>
          <ArrowUp />
          <ArrowDown />
        </VScroll>
      </Viewport>
      <WindowsTaskbar />
    </Screen>
  );
}
